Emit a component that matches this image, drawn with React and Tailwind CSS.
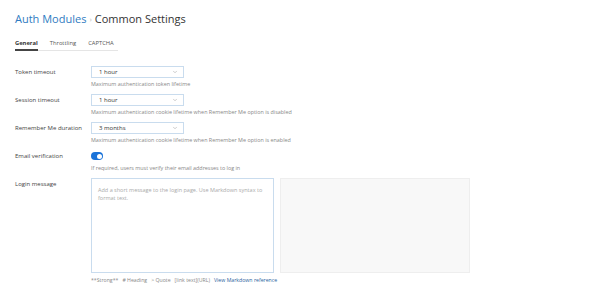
import React from "react";
import { ChevronDown } from "lucide-react";

const font = { fontFamily: '"Open Sans", "Noto Sans", sans-serif' };

const SelectBox = ({ value }) => (
  <div className="flex items-center justify-between w-[93px] h-[12px] border border-[#c9dcee] bg-white pl-[7px] pr-[5px]">
    <span className="text-[6px] leading-none text-[#333]">{value}</span>
    <ChevronDown size={6} strokeWidth={2} className="text-[#999]" />
  </div>
);

const Row = ({ label, children, help }) => (
  <div className="flex">
    <div className="w-[76px] shrink-0 text-[6px] leading-[12px] text-[#444]">{label}</div>
    <div className="flex flex-col">
      {children}
      {help && (
        <div className="mt-[3px] text-[5.4px] leading-[7px] text-[#888]">{help}</div>
      )}
    </div>
  </div>
);

export default function App() {
  return (
    <div className="w-[600px] h-[295px] bg-white px-[15px] pt-[10px]" style={font}>
      <h1 className="flex items-center text-[11px] leading-[18px]">
        <span className="text-[#2f7bc1]">Auth Modules</span>
        <span className="mx-[3px] text-[8px] text-[#bbb]">›</span>
        <span className="text-[#333]">Common Settings</span>
      </h1>

      <div className="mt-[11px] flex w-[103px] gap-[12px] border-b border-[#e5e5e5] text-[5.8px] leading-[9px]">
        <div className="border-b-2 border-[#444] pb-[1px] -mb-px font-bold text-[#333]">General</div>
        <div className="pb-[2px] text-[#555]">Throttling</div>
        <div className="pb-[2px] text-[#555]">CAPTCHA</div>
      </div>

      <div className="mt-[15px] flex flex-col gap-[6px]">
        <Row label="Token timeout" help="Maximum authentication token lifetime">
          <SelectBox value="1 hour" />
        </Row>
        <Row
          label="Session timeout"
          help="Maximum authentication cookie lifetime when Remember Me option is disabled"
        >
          <SelectBox value="1 hour" />
        </Row>
        <Row
          label="Remember Me duration"
          help="Maximum authentication cookie lifetime when Remember Me option is enabled"
        >
          <SelectBox value="3 months" />
        </Row>
        <Row
          label="Email verification"
          help="If required, users must verify their email addresses to log in"
        >
          <div className="flex h-[12px] items-center">
            <div className="flex h-[8px] w-[12px] items-center justify-end rounded-full bg-[#1a73d9] px-[1.5px]">
              <div className="h-[5px] w-[5px] rounded-full bg-white" />
            </div>
          </div>
        </Row>
        <div className="flex">
          <div className="w-[76px] shrink-0 text-[6px] leading-[12px] text-[#444]">Login message</div>
          <div className="flex flex-col">
            <div className="flex gap-[6px]">
              <div className="h-[95px] w-[183px] border border-[#c9dcee] px-[6px] py-[7px] text-[5.5px] leading-[8px] text-[#aaa]">
                Add a short message to the login page. Use Markdown syntax to format text.
              </div>
              <div className="h-[95px] w-[190px] border border-[#eeeeee] bg-[#f8f8f8]" />
            </div>
            <div className="mt-[4px] flex gap-[4px] text-[5.2px] leading-[7px] text-[#888]">
              <span>**Strong**</span>
              <span># Heading</span>
              <span>&gt; Quote</span>
              <span>[link text](URL)</span>
              <span className="text-[#2b5f9e]">View Markdown reference</span>
            </div>
          </div>
        </div>
      </div>
    </div>
  );
}
